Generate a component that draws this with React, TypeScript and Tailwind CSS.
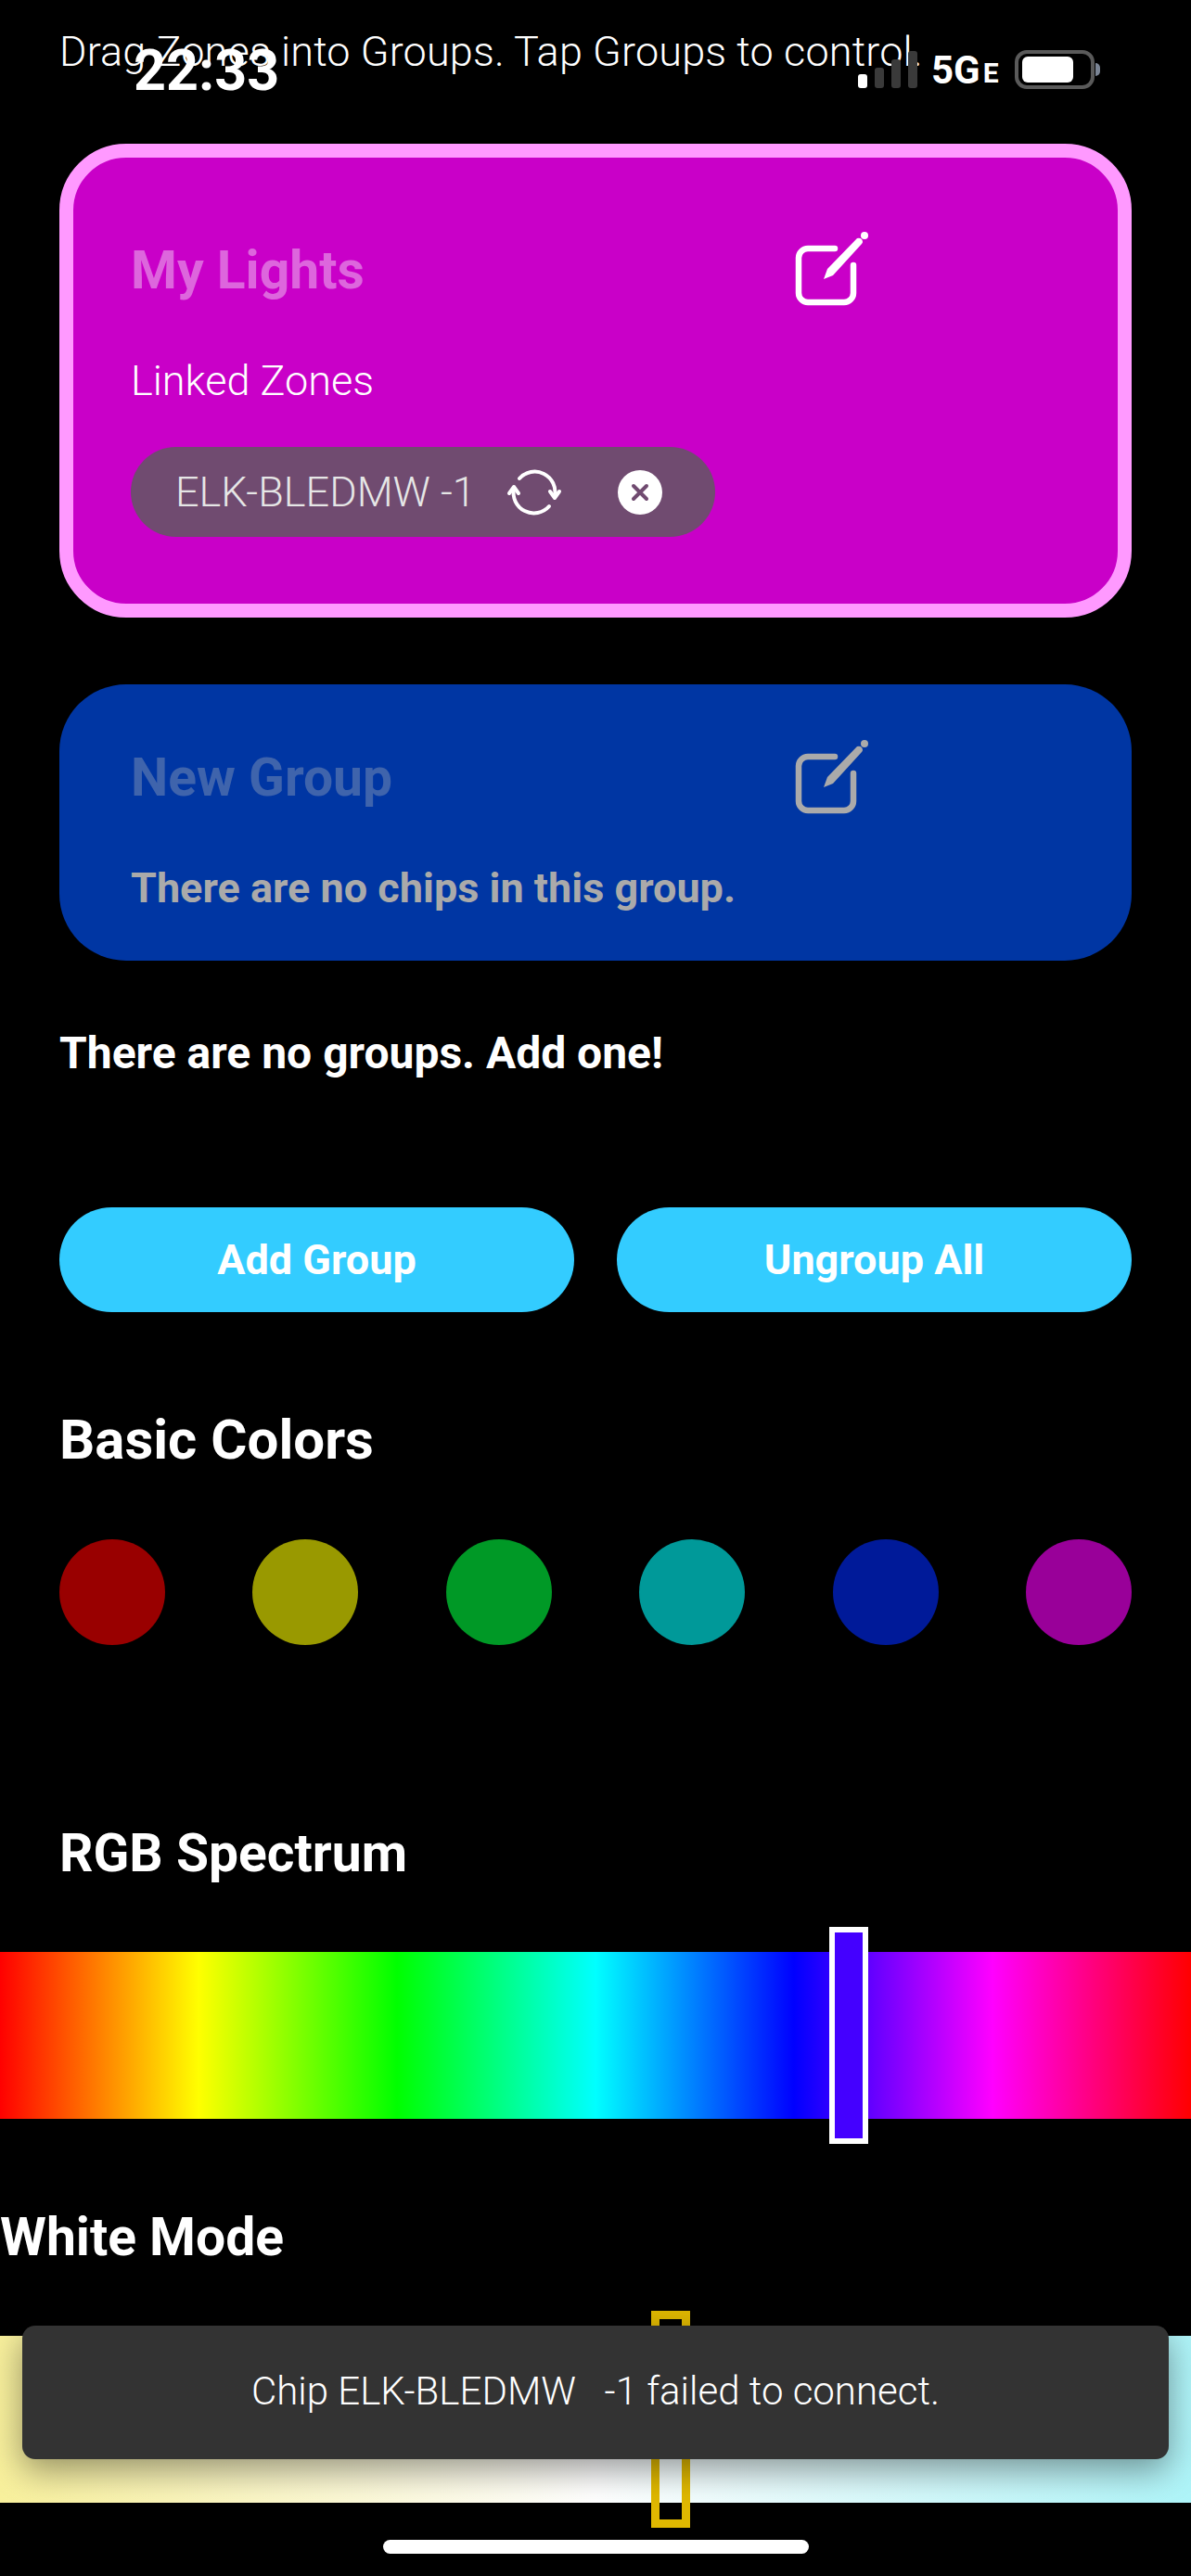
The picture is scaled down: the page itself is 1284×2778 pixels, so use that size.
import React from 'react'

const BASIC_COLORS = [
  'bg-[#990000]',
  'bg-[#999900]',
  'bg-[#009926]',
  'bg-[#009999]',
  'bg-[#001a99]',
  'bg-[#990099]',
]

const EditIcon = ({ color = '#ffffff' }: { color?: string }) => (
  <svg width="82" height="84" viewBox="0 0 82 84" fill="none" className="-translate-y-[4px]">
    <path
      d="M45 20H16a10 10 0 0 0-10 10v38a10 10 0 0 0 10 10h39a10 10 0 0 0 10-10V38"
      stroke={color}
      strokeWidth="6.5"
      strokeLinecap="round"
    />
    <path d="M33 53L37 42L69 9Q72 8 74 10Q76 13 74 15L43 49Z" fill={color} />
    <circle cx="77" cy="6" r="4" fill={color} />
  </svg>
)

const SyncIcon = () => (
  <svg width="60" height="60" viewBox="0 0 60 60" fill="none" stroke="#ffffff" strokeWidth="4" strokeLinecap="round" strokeLinejoin="round">
    <path d="M8 26A22 22 0 0 0 46 45" />
    <path d="M52 34A22 22 0 0 0 14 15" />
    <path d="M3 31L8 24L13 31" />
    <path d="M47 29L52 36L57 29" />
  </svg>
)

const CloseIcon = () => (
  <div className="flex h-[48px] w-[48px] items-center justify-center rounded-full bg-white">
    <svg width="22" height="22" viewBox="0 0 22 22" stroke="#704b70" strokeWidth="4" strokeLinecap="round">
      <path d="M4 4L18 18M18 4L4 18" />
    </svg>
  </div>
)

const StatusBar = () => (
  <div className="absolute left-0 top-0 h-[110px] w-full text-white">
    <span className="absolute left-[144px] top-[44px] text-[61px] font-bold leading-[64px]">22:33</span>
    <div className="absolute left-[925px] top-[55px] flex items-end gap-[8px]">
      <div className="h-[15px] w-[10px] rounded-[3px] bg-white" />
      <div className="h-[22px] w-[10px] rounded-[3px] bg-[#3a3a3a]" />
      <div className="h-[31px] w-[10px] rounded-[3px] bg-[#3a3a3a]" />
      <div className="h-[40px] w-[10px] rounded-[3px] bg-[#3a3a3a]" />
    </div>
    <div className="absolute left-[1004px] top-[54px] flex items-end text-[42px] font-bold leading-[44px]">
      5G<span className="ml-[3px] text-[30px] leading-[38px]">E</span>
    </div>
    <div className="absolute left-[1094px] top-[54px] flex h-[42px] w-[86px] items-center rounded-[13px] border-[4px] border-[#5a5a5a] pl-[4px]">
      <div className="h-[28px] w-[55px] rounded-[6px] bg-white" />
    </div>
    <div className="absolute left-[1181px] top-[68px] h-[14px] w-[5px] rounded-r-full bg-[#7a8494]" />
  </div>
)

export default function App() {
  return (
    <div className="relative h-[2778px] w-full overflow-hidden bg-black font-['Roboto',sans-serif] text-white">
      <div className="px-[64px]">
        <p className="pt-[30px] text-[45px] font-light leading-[52px] tracking-[0.15px]">Drag Zones into Groups. Tap Groups to control.</p>

        <section className="mt-[73px] h-[511px] rounded-[72px] border-[15px] border-[#ff99ff] bg-[#c900c8] pl-[62px] pt-[82px]">
          <div className="flex w-[796px] items-center justify-between">
            <h2 className="-mt-[4px] text-[57px] font-bold leading-[70px] text-[#dd66dd]">My Lights</h2>
            <EditIcon />
          </div>
          <p className="mt-[45px] text-[45px] font-light leading-[60px]">Linked Zones</p>
          <div className="mt-[41px] flex h-[97px] w-[630px] items-center rounded-full bg-[#704b70] pl-[48px]">
            <span className="w-[357px] text-[45px] font-light leading-[60px] text-[#e6e6e6]">ELK-BLEDMW -1</span>
            <SyncIcon />
            <div className="ml-[60px]">
              <CloseIcon />
            </div>
          </div>
        </section>

        <section className="mt-[72px] h-[298px] rounded-[72px] bg-[#0036a3] pl-[77px] pt-[62px]">
          <div className="flex w-[796px] items-center justify-between">
            <h2 className="-mt-[6px] text-[57px] font-bold leading-[70px] text-[#3f64ac]">New Group</h2>
            <EditIcon color="#aaaaaa" />
          </div>
          <p className="mt-[44px] text-[45px] font-bold leading-[60px] text-[#aaaaaa]">There are no chips in this group.</p>
        </section>

        <p className="mt-[70px] text-[48px] font-bold leading-[60px]">There are no groups. Add one!</p>

        <div className="mt-[136px] flex gap-[46px]">
          <button className="h-[113px] flex-1 rounded-full bg-[#33ccff] text-[45px] font-bold">Add Group</button>
          <button className="h-[113px] flex-1 rounded-full bg-[#33ccff] text-[45px] font-bold">Ungroup All</button>
        </div>

        <h3 className="mt-[103px] text-[60px] font-bold leading-[70px]">Basic Colors</h3>
        <div className="mt-[72px] flex justify-between">
          {BASIC_COLORS.map((color) => (
            <div key={color} className={`h-[114px] w-[114px] rounded-full ${color}`} />
          ))}
        </div>

        <h3 className="mt-[190px] text-[57px] font-bold leading-[70px]">RGB Spectrum</h3>
      </div>

      <div className="relative mt-[71px] h-[180px] bg-[linear-gradient(to_right,#ff0000,#ffff00,#00ff00,#00ffff,#0000ff,#ff00ff,#ff0000)]">
        <div className="absolute left-[894px] top-[-27px] h-[234px] w-[42px] border-[6px] border-white bg-[#4400ff]" />
      </div>

      <h3 className="mt-[93px] text-[57px] font-bold leading-[70px]">White Mode</h3>

      <div className="relative mt-[71px] h-[180px] bg-[linear-gradient(to_right,#f8f09c,#ffffff,#aef4f8)]">
        <div className="absolute left-[702px] top-[-27px] h-[234px] w-[42px] border-[9px] border-[#e0b800]" />
      </div>

      <StatusBar />

      <div className="absolute left-[24px] top-[2508px] flex h-[144px] w-[1236px] items-center justify-center rounded-[14px] bg-[#333333] pb-[4px] text-[42px] font-light shadow-[0_12px_36px_rgba(0,0,0,0.4)]">
        <span className="whitespace-pre">Chip ELK-BLEDMW   -1 failed to connect.</span>
      </div>

      <div className="absolute left-[413px] top-[2739px] h-[15px] w-[459px] rounded-full bg-white" />
    </div>
  )
}
